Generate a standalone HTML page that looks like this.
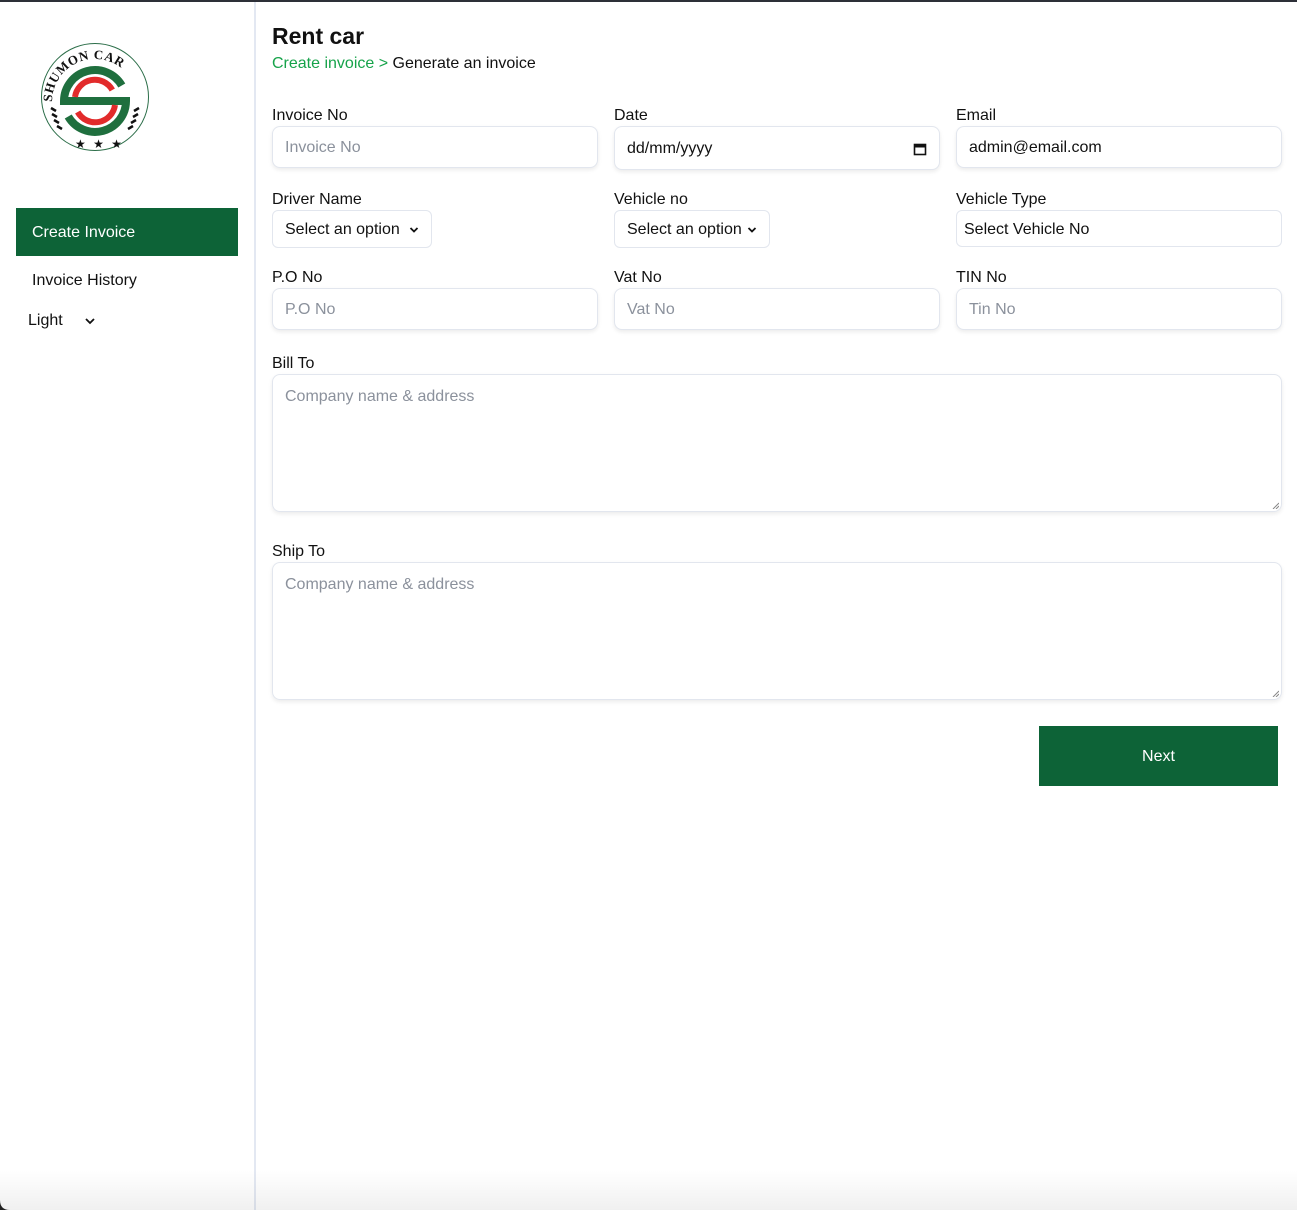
<!DOCTYPE html>
<html><head><meta charset="utf-8"><style>
*{box-sizing:border-box;margin:0;padding:0}
body{width:1297px;height:1210px;background:#fff;font-family:"Liberation Sans",Arial,sans-serif;color:#111;position:relative;overflow:hidden}
.top{position:absolute;left:0;top:0;width:1297px;height:2px;background:#2d3038}
.side{position:absolute;left:0;top:2px;width:256px;height:1208px;border-right:2px solid #e3e8f2}
.nav1{position:absolute;left:16px;top:208px;width:222px;height:48px;background:#0d6337;color:#fff;font-size:16px;padding:16px 16px}
.nav2{position:absolute;left:32px;top:272px;font-size:16px}
.nav3{position:absolute;left:28px;top:312px;font-size:16px}
.a{position:absolute}
h1{position:absolute;left:272px;top:23px;font-size:23px;font-weight:700}
.bc{position:absolute;left:272px;top:55px;font-size:16px}
.bc span{color:#16a34a}
.lbl{position:absolute;font-size:16px}
.in{position:absolute;border:1px solid #e2e6ee;border-radius:8px;background:#fff;box-shadow:0 2px 4px rgba(0,0,0,.08);font-size:16px;padding:2px 12px 0;display:flex;align-items:center;color:#111}
.ph{color:#8b919c}
.sel{position:absolute;border:1px solid #e2e6ee;border-radius:6px;font-size:16px;padding:2px 12px 0;display:flex;align-items:center;justify-content:space-between}
.ta{position:absolute;left:272px;width:1010px;height:138px;border:1px solid #e2e6ee;border-radius:8px;box-shadow:0 2px 4px rgba(0,0,0,.08);padding:13px 12px;font-size:16px;color:#8b919c}
.btn{position:absolute;left:1039px;top:726px;width:239px;height:60px;background:#0d6337;color:#fff;font-size:16px;display:flex;align-items:center;justify-content:center;padding-top:2px}
.bot{position:absolute;left:0;top:1170px;width:1297px;height:40px;background:linear-gradient(to bottom,rgba(0,0,0,0),rgba(0,0,0,.06))}
</style></head><body>
<div class="top"></div>
<div class="side"></div>
<svg class="a" style="left:40px;top:42px" width="110" height="110" viewBox="0 0 110 110">
<circle cx="55" cy="55" r="53.5" fill="#fff" stroke="#2c6e49" stroke-width="1"/>
<defs><path id="arc" d="M12,60 A43,43 0 0 1 98,60"/></defs>
<text font-family="Liberation Serif,serif" font-size="13" font-weight="700" fill="#111" letter-spacing="0.6"><textPath href="#arc">SHUMON CAR</textPath></text>
<path d="M81.8 43.5 A31 31 0 0 0 24 59 L86 59 A31 31 0 0 1 28.2 74.5" fill="none" stroke="#1f6f3e" stroke-width="8"/>
<path d="M72.3 48 A20 20 0 0 0 35 55" fill="none" stroke="#e22b2b" stroke-width="6"/>
<path d="M75 63 A20 20 0 0 1 37.7 70" fill="none" stroke="#e22b2b" stroke-width="6"/>
<text x="35" y="106" font-size="12" fill="#111" letter-spacing="2">★ ★ ★</text>
<path d="M11 66 l5 3 M12 72 l5 3 M14 78 l5 3 M17 84 l5 3 M99 66 l-5 3 M98 72 l-5 3 M96 78 l-5 3 M93 84 l-5 3" stroke="#111" stroke-width="2.5"/>
</svg>
<div class="nav1">Create Invoice</div>
<div class="nav2">Invoice History</div>
<div class="nav3">Light <svg width="10" height="8" style="margin-left:18px" viewBox="0 0 10 8"><path d="M1 2l4 4 4-4" fill="none" stroke="#111" stroke-width="1.8"/></svg></div>
<h1>Rent car</h1>
<div class="bc"><span>Create invoice &gt;</span> Generate an invoice</div>

<div class="lbl" style="left:272px;top:107px">Invoice No</div>
<div class="lbl" style="left:614px;top:107px">Date</div>
<div class="lbl" style="left:956px;top:107px">Email</div>
<div class="in" style="left:272px;top:126px;width:326px;height:42px"><span class="ph">Invoice No</span></div>
<div class="in" style="left:614px;top:126px;width:326px;height:44px;justify-content:space-between">dd/mm/yyyy<svg width="14" height="14" viewBox="0 0 14 14"><rect x="1.5" y="2.5" width="11" height="10" fill="none" stroke="#111" stroke-width="1.6"/><rect x="1.5" y="2.5" width="11" height="3" fill="#111"/></svg></div>
<div class="in" style="left:956px;top:126px;width:326px;height:42px">admin@email.com</div>

<div class="lbl" style="left:272px;top:191px">Driver Name</div>
<div class="lbl" style="left:614px;top:191px">Vehicle no</div>
<div class="lbl" style="left:956px;top:191px">Vehicle Type</div>
<div class="sel" style="left:272px;top:210px;width:160px;height:38px">Select an option<svg width="10" height="8" viewBox="0 0 10 8"><path d="M1.5 2l3.5 3.5 3.5-3.5" fill="none" stroke="#111" stroke-width="1.8"/></svg></div>
<div class="sel" style="left:614px;top:210px;width:156px;height:38px">Select an option<svg width="10" height="8" viewBox="0 0 10 8"><path d="M1.5 2l3.5 3.5 3.5-3.5" fill="none" stroke="#111" stroke-width="1.8"/></svg></div>
<div class="sel" style="left:956px;top:210px;width:326px;height:37px;padding-left:7px">Select Vehicle No</div>

<div class="lbl" style="left:272px;top:269px">P.O No</div>
<div class="lbl" style="left:614px;top:269px">Vat No</div>
<div class="lbl" style="left:956px;top:269px">TIN No</div>
<div class="in" style="left:272px;top:288px;width:326px;height:42px"><span class="ph">P.O No</span></div>
<div class="in" style="left:614px;top:288px;width:326px;height:42px"><span class="ph">Vat No</span></div>
<div class="in" style="left:956px;top:288px;width:326px;height:42px"><span class="ph">Tin No</span></div>

<div class="lbl" style="left:272px;top:355px">Bill To</div>
<div class="ta" style="top:374px">Company name &amp; address<svg class="a" style="right:2px;bottom:2px" width="7" height="7"><path d="M1 7L7 1M4 7L7 4" stroke="#888"/></svg></div>
<div class="lbl" style="left:272px;top:543px">Ship To</div>
<div class="ta" style="top:562px">Company name &amp; address<svg class="a" style="right:2px;bottom:2px" width="7" height="7"><path d="M1 7L7 1M4 7L7 4" stroke="#888"/></svg></div>
<div class="btn">Next</div>
<div class="bot"></div>
<svg class="a" style="left:0;top:1200px" width="10" height="10"><path d="M0 0 Q0 10 10 10 L0 10Z" fill="#222"/></svg>
</body></html>
